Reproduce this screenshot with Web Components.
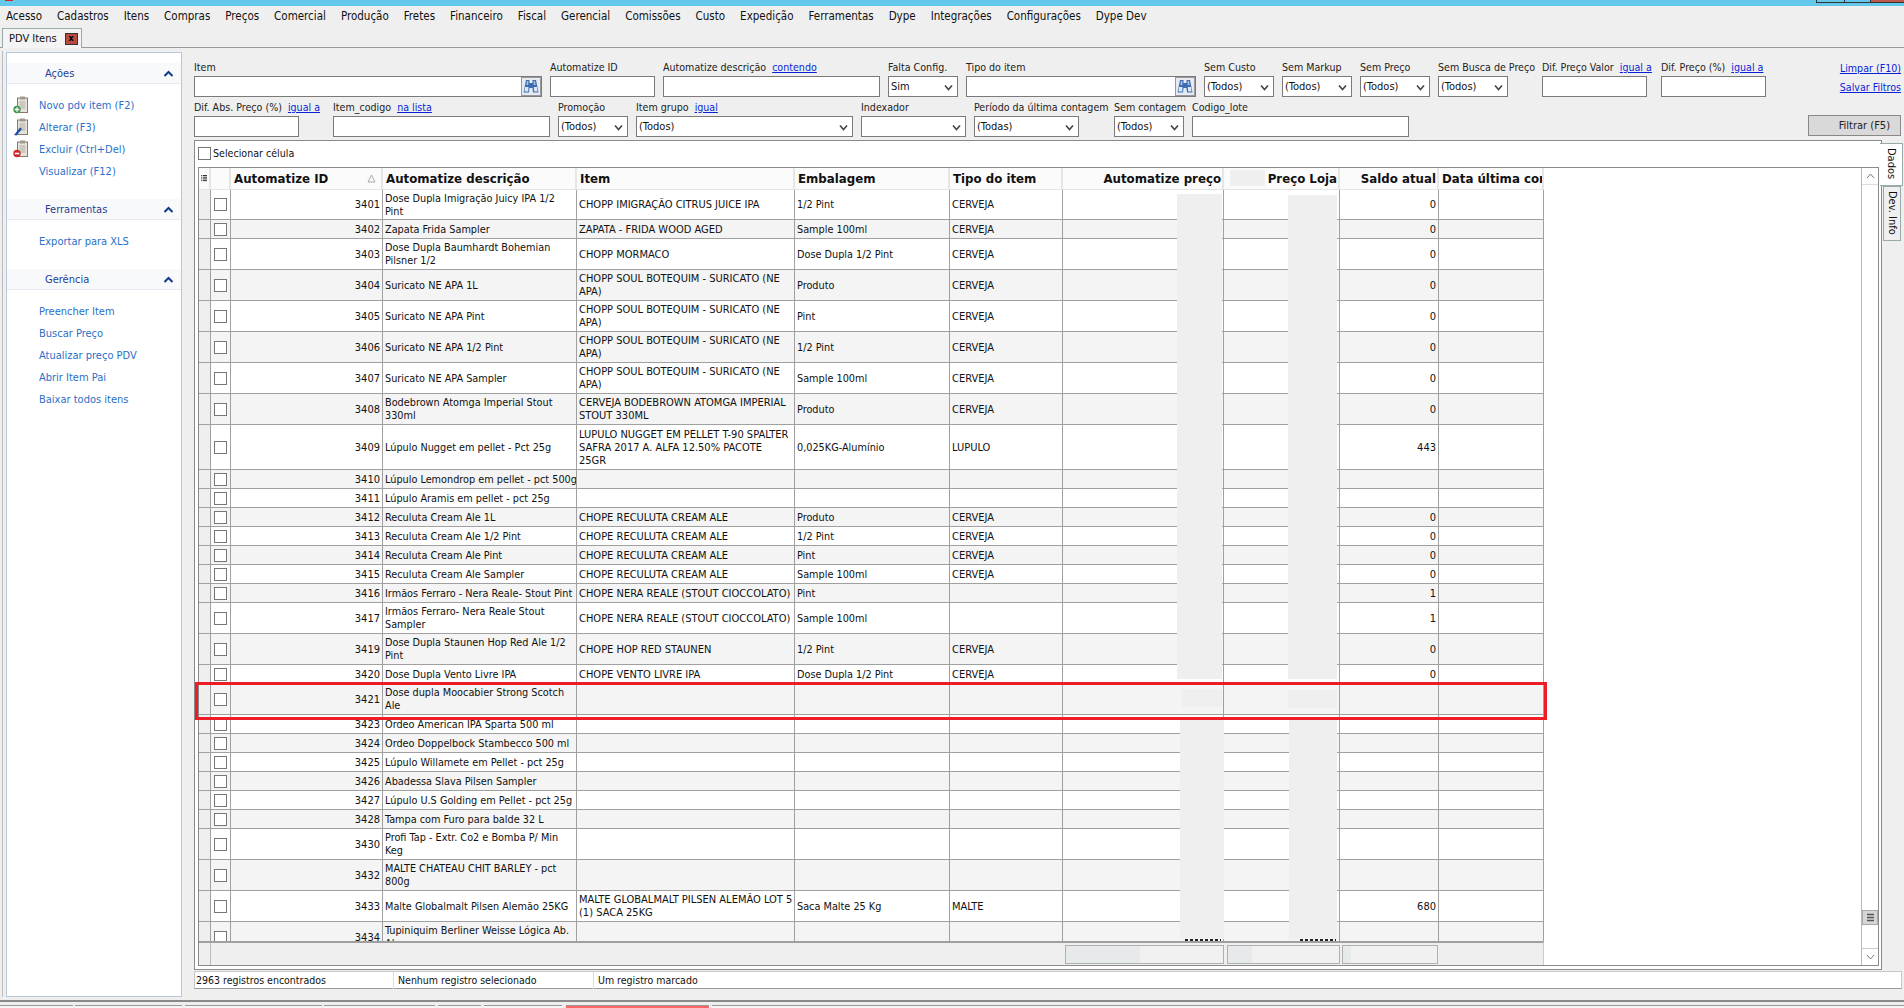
<!DOCTYPE html>
<html><head><meta charset="utf-8"><title>PDV Itens</title>
<style>
html,body{margin:0;height:100%;overflow:hidden;background:#efefef}
pdv-app{display:block;height:1008px}
</style></head><body>
<pdv-app></pdv-app>
<script>
const FONT = '"DejaVu Sans Condensed","DejaVu Sans",sans-serif';
const chevron = `<svg width="11" height="7" viewBox="0 0 11 7"><path d="M1.5 6 5.5 2l4 4" fill="none" stroke="#123a8c" stroke-width="2"/></svg>`;
const binoculars = `<svg width="16" height="15" viewBox="0 0 16 15"><path d="M3 1h3.500v3h3V1H13l2.500 12.500H10L9.500 9h-3L6 13.500H.5z" fill="#3f6cb0"/><path d="M2 8h3.500l-.3 4.500H1.500zM10.800 8h3.200l.5 4.500h-3.300z" fill="#dce8f6"/><path d="M4 2h1.300v4H3.400zM10.700 2H12l.6 4h-1.900z" fill="#a9c4e6"/></svg>`;

function clipIcon(badge) {
  const marks = {
    add: '<circle cx="4" cy="13.500" r="3.700" fill="#3f9a4f"/><path d="M1.800 13.500h4.400M4 11.300v4.400" stroke="#fff" stroke-width="1.300"/>',
    edit: '<path d="M1 17 7 9.500l2 1.500-5.500 6.500z" fill="#1f4fa8"/>',
    del: '<circle cx="4" cy="13.500" r="3.700" fill="#d02828"/><path d="M1.800 13.500h4.400" stroke="#fff" stroke-width="1.600"/>',
  };
  return `<svg width="16" height="18" viewBox="0 0 16 18"><rect x="4.500" y="2" width="10" height="14.500" fill="#e6e3da" stroke="#85796a"/><rect x="7" y=".5" width="5" height="3" fill="#a09a8c"/><path d="M6.500 6h6M6.500 8h6M6.500 10h6M6.500 12h6" stroke="#b0aca2"/>${marks[badge]||''}</svg>`;
}

class PdvSection extends HTMLElement {
  constructor() {
    super();
    this.attachShadow({mode:'open'}).innerHTML = `<style>
      :host{display:block}
      .head{height:21px;box-sizing:border-box;display:flex;align-items:center;justify-content:space-between;padding:0 7px 0 38px;background:#f8f9fb;border-bottom:1px solid #e6eaf0;color:#1f3f95;margin-bottom:10px}
      .body{display:flex;flex-direction:column}
    </style><div class="head"><span>${this.getAttribute('title')}</span>${chevron}</div><div class="body"><slot></slot></div>`;
  }
}
class PdvAction extends HTMLElement {
  constructor() {
    super();
    const ic = this.getAttribute('icon');
    this.attachShadow({mode:'open'}).innerHTML = `<style>
      :host{display:flex;align-items:center;height:22px;color:#2a6fc9;white-space:nowrap}
      .i{width:32px;padding-left:6px;box-sizing:border-box;height:18px;flex:none;display:block}
    </style><span class="i">${ic?clipIcon(ic):''}</span><slot></slot>`;
  }
}
class PdvField extends HTMLElement {
  constructor() {
    super();
    const w = this.getAttribute('w'), iw = this.getAttribute('iw') || w;
    const link = this.getAttribute('link'), kind = this.getAttribute('kind') || 'input';
    const value = this.getAttribute('value') || '';
    let ctl = '';
    if (kind === 'select') ctl = `<svg class="arrow" width="9" height="7" viewBox="0 0 9 7"><path d="M1 1.500l3.500 4 3.500-4" fill="none" stroke="#444" stroke-width="1.600"/></svg>`;
    if (kind === 'lookup') ctl = `<span class="bino">${binoculars}</span>`;
    this.attachShadow({mode:'open'}).innerHTML = `<style>
      :host{display:block;width:${w}px;flex:none}
      .lab{height:19px;line-height:20px;font-size:10.6px;white-space:nowrap;color:#222}
      a{color:#0a1fd8;text-decoration:underline;margin-left:6px}
      .box{height:21px;width:${iw}px;box-sizing:border-box;border:1px solid #7a7a7a;background:#fff;display:flex;align-items:center;padding:0 2px;position:relative;white-space:nowrap}
      .arrow{position:absolute;right:4px;top:7px}
      .bino{position:absolute;right:0;top:0;width:20px;height:19px;background:#e6eaf2;border:1px solid #9a9a9a;box-sizing:border-box;display:flex;align-items:center;justify-content:center;overflow:hidden}
    </style><div class="lab">${this.getAttribute('label')}${link?`<a>${link}</a>`:''}</div><div class="box">${value}${ctl}</div>`;
  }
}
class PdvFilters extends HTMLElement {
  constructor() {
    super();
    const f = (label,w,o={}) => `<pdv-field label="${label}" w="${w}" iw="${o.iw||w}" kind="${o.k||'input'}" value="${o.v||''}" ${o.l?`link="${o.l}"`:''}></pdv-field>`;
    const S = {k:'select',v:'(Todos)'};
    this.attachShadow({mode:'open'}).innerHTML = `<style>
      :host{display:block;height:89px;flex:none;box-sizing:border-box;padding:6px 3px 0 194px;position:relative}
      .row{display:flex;gap:8px;height:40px}
      .links{margin-left:auto;display:flex;flex-direction:column;align-items:flex-end;gap:5px;line-height:14px;font-size:10.6px;color:#0a1fd8;text-decoration:underline;white-space:nowrap;padding-top:4px}
      button{margin-left:auto;align-self:flex-end;width:93px;height:21px;margin-bottom:1px;background:#d9d9d9;border:1px solid #888;font:inherit;color:#222;text-align:right;padding:0 10px 0 0}
    </style>
    <div class="row">
      ${f('Item',348,{k:'lookup'})}${f('Automatize ID',105)}${f('Automatize descrição',217,{l:'contendo'})}
      ${f('Falta Config.',70,{k:'select',v:'Sim'})}${f('Tipo do item',230,{k:'lookup'})}
      ${f('Sem Custo',70,S)}${f('Sem Markup',70,S)}${f('Sem Preço',70,S)}${f('Sem Busca de Preço',96,{...S,iw:70})}
      ${f('Dif. Preço Valor',111,{iw:105,l:'igual a'})}${f('Dif. Preço (%)',105,{l:'igual a'})}
      <div class="links"><span>Limpar (F10)</span><span>Salvar Filtros</span></div>
    </div>
    <div class="row">
      ${f('Dif. Abs. Preço (%)',131,{iw:105,l:'igual a'})}${f('Item_codigo',217,{l:'na lista'})}${f('Promoção',70,S)}
      ${f('Item grupo',217,{...S,l:'igual'})}${f('Indexador',105,{k:'select'})}${f('Período da última contagem',132,{k:'select',v:'(Todas)',iw:105})}
      ${f('Sem contagem',70,S)}${f('Codigo_lote',217)}
      <button>Filtrar (F5)</button>
    </div>`;
  }
}
const COLS = '12px 20px 152px 194px 218px 155px 113px 161px 116px 99px 105px';
class PdvRow extends HTMLElement {
  set data(r) {
    const root = this.shadowRoot || this.attachShadow({mode:'open'});
    root.innerHTML = `<style>
      :host{display:grid;grid-template-columns:${COLS};width:1345px;height:${r.h}px;box-sizing:border-box;border-bottom:1px solid #a0a0a0;background:${r.alt?'#f4f4f4':'#fff'};line-height:13px}
      div{border-right:1px solid #a0a0a0;display:flex;align-items:center;padding:0 2px;white-space:pre;overflow:hidden;min-width:0;box-sizing:border-box}
      .ind{background:#efefef;padding:0}
      .chk{justify-content:center;padding:0}
      .chk i{width:13px;height:13px;box-sizing:border-box;border:1px solid #777;background:#fff;display:block}
      .n{justify-content:flex-end}
      .s{font-size:10.8px}
    </style><div class="ind"></div><div class="chk"><i></i></div><div class="n">${r.id}</div><div class="s">${r.d}</div><div>${r.i||''}</div><div class="s">${r.e||''}</div><div>${r.t||''}</div><div></div><div></div><div class="n">${r.s??''}</div><div></div>`;
  }
}
const CB='CHOPP SOUL BOTEQUIM - SURICATO (NE\nAPA)', CR='CHOPE RECULUTA CREAM ALE', NR='CHOPE NERA REALE (STOUT CIOCCOLATO)';
const ROWS = [
 [30,3401,'Dose Dupla Imigração Juicy IPA 1/2\nPint','CHOPP IMIGRAÇÃO CITRUS JUICE IPA','1/2 Pint','CERVEJA',0],
 [19,3402,'Zapata Frida Sampler','ZAPATA - FRIDA WOOD AGED','Sample 100ml','CERVEJA',0],
 [31,3403,'Dose Dupla Baumhardt Bohemian\nPilsner 1/2','CHOPP MORMACO','Dose Dupla 1/2 Pint','CERVEJA',0],
 [31,3404,'Suricato NE APA 1L',CB,'Produto','CERVEJA',0],
 [31,3405,'Suricato NE APA Pint',CB,'Pint','CERVEJA',0],
 [31,3406,'Suricato NE APA 1/2 Pint',CB,'1/2 Pint','CERVEJA',0],
 [31,3407,'Suricato NE APA Sampler',CB,'Sample 100ml','CERVEJA',0],
 [31,3408,'Bodebrown Atomga Imperial Stout\n330ml','CERVEJA BODEBROWN ATOMGA IMPERIAL\nSTOUT 330ML','Produto','CERVEJA',0],
 [45,3409,'Lúpulo Nugget em pellet - Pct 25g','LUPULO NUGGET EM PELLET T-90 SPALTER\nSAFRA 2017 A. ALFA 12.50% PACOTE\n25GR','0,025KG-Alumínio','LUPULO',443],
 [19,3410,'Lúpulo Lemondrop em pellet - pct 500g'],
 [19,3411,'Lúpulo Aramis em pellet - pct 25g'],
 [19,3412,'Reculuta Cream Ale 1L',CR,'Produto','CERVEJA',0],
 [19,3413,'Reculuta Cream Ale 1/2 Pint',CR,'1/2 Pint','CERVEJA',0],
 [19,3414,'Reculuta Cream Ale Pint',CR,'Pint','CERVEJA',0],
 [19,3415,'Reculuta Cream Ale Sampler',CR,'Sample 100ml','CERVEJA',0],
 [19,3416,'Irmãos Ferraro - Nera Reale- Stout Pint',NR,'Pint','',1],
 [31,3417,'Irmãos Ferraro- Nera Reale Stout\nSampler',NR,'Sample 100ml','',1],
 [31,3419,'Dose Dupla Staunen Hop Red Ale 1/2\nPint','CHOPE HOP RED STAUNEN','1/2 Pint','CERVEJA',0],
 [19,3420,'Dose Dupla Vento Livre IPA','CHOPE VENTO LIVRE IPA','Dose Dupla 1/2 Pint','CERVEJA',0],
 [31,3421,'Dose dupla Moocabier Strong Scotch\nAle'],
 [19,3423,'Ordeo American IPA Sparta 500 ml'],
 [19,3424,'Ordeo Doppelbock Stambecco 500 ml'],
 [19,3425,'Lúpulo Willamete em Pellet - pct 25g'],
 [19,3426,'Abadessa Slava Pilsen Sampler'],
 [19,3427,'Lúpulo U.S Golding em Pellet - pct 25g'],
 [19,3428,'Tampa com Furo para balde 32 L'],
 [31,3430,'Profi Tap - Extr. Co2 e Bomba P/ Min\nKeg'],
 [31,3432,'MALTE CHATEAU CHIT BARLEY - pct\n800g'],
 [31,3433,'Malte Globalmalt Pilsen Alemão 25KG','MALTE GLOBALMALT PILSEN ALEMÃO LOT 5\n(1) SACA 25KG','Saca Malte 25 Kg','MALTE',680],
 [31,3434,'Tupiniquim Berliner Weisse Lógica Ab.\nAle'],
];
class PdvGrid extends HTMLElement {
  constructor() {
    super();
    const heads = [['',''],['',''],['Automatize ID','sort'],['Automatize descrição',''],['Item',''],['Embalagem',''],['Tipo do item',''],['Automatize preço','r'],['Preço Loja','r'],['Saldo atual','r'],['Data última contagem','']];
    this.attachShadow({mode:'open'}).innerHTML = `<style>
      :host{display:block;position:relative;height:799px;box-sizing:border-box;border:1px solid #8a8a8a;background:#fff;overflow:hidden;width:1681px;margin-left:3px;flex:none}
      .head{display:grid;grid-template-columns:${COLS};width:1345px;height:22px;box-sizing:border-box;background:#fbfbfb;border-bottom:1px solid #e4e4e4;font:bold 11.8px "DejaVu Sans",sans-serif;color:#111}
      .head div{border-right:2px solid #e6e6e6;display:flex;align-items:center;justify-content:space-between;padding:0 1px 0 3px;white-space:nowrap;overflow:hidden;box-sizing:border-box;min-width:0}
      .head .r{justify-content:flex-end}
      .body{height:751px;overflow:hidden}
      .foot{display:grid;grid-template-columns:12px 854px 159px 3px 113px 2px 96px;width:1345px;height:24px;box-sizing:border-box;border-top:2px solid #a0a0a0;border-right:1px solid #ccc;background:#efefef;align-items:center}
      .foot .c{height:100%;border-right:1px solid #bbb;box-sizing:border-box}
      .foot i{display:block;height:19px;box-sizing:border-box;border:1px solid #b0b0b0}
      .redact{position:absolute;background:#efefef}
      .peek{position:absolute;top:771px;height:2px;background:repeating-linear-gradient(90deg,#222 0 3px,transparent 3px 5px)}
      .sb{position:absolute;right:0;top:0;bottom:0;width:17px;background:#fff;border-left:1px solid #b8b8b8;box-sizing:border-box}
      .sb b{position:absolute;left:0;right:0;display:flex;align-items:center;justify-content:center;box-sizing:border-box}
      .up{top:0;height:17px;border-bottom:1px solid #ddd}
      .dn{bottom:0;height:17px;border-top:1px solid #ccc}
      .th{top:742px;height:15px;background:#d6d6d6;border:1px solid #a8a8a8}
      .sort{width:9px;height:9px;margin-right:4px}
    </style>
    <div class="head">${heads.map(([t,k],i)=>i==0?`<div style="padding:0 2px"><svg width="7" height="9" viewBox="0 0 7 9"><path d="M0 1h1M2 1h5M0 3h1M2 3h5M0 5h1M2 5h5M0 7h1M2 7h5" stroke="#111"/></svg></div>`:`<div class="${k=='r'?'r':''}">${t}${k=='sort'?'<svg class="sort" viewBox="0 0 9 9"><path d="M4.500 1 8 8H1z" fill="none" stroke="#aaa"/></svg>':''}</div>`).join('')}</div>
    <div class="body" id="b"></div>
    <div class="foot"><span class="c"></span><span></span><i style="background:linear-gradient(90deg,#e6eaea 47%,#f1f1f1 47%)"></i><span></span><i style="background:linear-gradient(90deg,#e6eaea 22%,#f1f1f1 22%)"></i><span></span><i style="background:linear-gradient(90deg,#e6eaea 8%,#f1f1f1 8%)"></i></div>
    <div class="sb"><b class="up"><svg width="9" height="6" viewBox="0 0 9 6"><path d="M1 5l3.500-4L8 5" fill="none" stroke="#777"/></svg></b>
      <b class="th"><svg width="7" height="9" viewBox="0 0 7 9"><path d="M0 1.500h7M0 4.500h7M0 7.500h7" stroke="#555" stroke-width="1.600"/></svg></b>
      <b class="dn"><svg width="9" height="6" viewBox="0 0 9 6"><path d="M1 1l3.500 4L8 1" fill="none" stroke="#777"/></svg></b></div>
    <span class="redact" style="left:1031px;top:2px;width:35px;height:16px"></span>
    <span class="redact" style="left:978px;top:26px;width:45px;height:485px"></span>
    <span class="redact" style="left:1089px;top:27px;width:49px;height:484px"></span>
    <span class="redact" style="left:983px;top:521px;width:40px;height:18px"></span>
    <span class="redact" style="left:1089px;top:522px;width:49px;height:18px"></span>
    <span class="redact" style="left:981px;top:552px;width:44px;height:219px"></span>
    <span class="redact" style="left:1090px;top:552px;width:48px;height:219px"></span>
    <span class="peek" style="left:986px;width:36px"></span>
    <span class="peek" style="left:1101px;width:36px"></span>`;
    const b = this.shadowRoot.getElementById('b');
    ROWS.forEach((x,i)=>{
      const r = document.createElement('pdv-row');
      r.data = {h:x[0],id:x[1],d:x[2],i:x[3],e:x[4],t:x[5],s:x[6],alt:i%2==1};
      b.appendChild(r);
    });
  }
}
class PdvStatus extends HTMLElement {
  constructor() {
    super();
    this.attachShadow({mode:'open'}).innerHTML = `<style>
      :host{display:grid;grid-template-columns:199px 200px 1fr;flex:none;height:18px;margin:1px 2px 0 194px;box-sizing:border-box;background:#fff;border:1px solid #c8c8c8;border-bottom:1px solid #999;line-height:17px;font-size:10.5px}
      span{padding-left:1px;border-right:1px solid #ddd;white-space:nowrap}
      span+span{padding-left:4px}
      span:last-child{border:0}
    </style><span>2963 registros encontrados</span><span>Nenhum registro selecionado</span><span>Um registro marcado</span>`;
  }
}
class PdvApp extends HTMLElement {
  constructor() {
    super();
    const menu = 'Acesso,Cadastros,Itens,Compras,Preços,Comercial,Produção,Fretes,Financeiro,Fiscal,Gerencial,Comissões,Custo,Expedição,Ferramentas,Dype,Integrações,Configurações,Dype Dev'.split(',');
    const dock = [[0,73],[75,107],[185,137],[324,111],[438,43],[484,78],[566,143,'#f66'],[712,1192]];
    this.attachShadow({mode:'open'}).innerHTML = `<style>
      :host{display:flex;flex-direction:column;height:1008px;font:11px ${FONT};color:#111;position:relative;overflow:hidden}
      .title{height:6px;background:#64c8ea;position:relative;flex:none}
      .title i{position:absolute;top:0;height:2px;border:1px solid #333;border-top:0}
      .title u{position:absolute;left:5px;top:0;width:8px;height:1px;background:#c03028}
      .menu{height:22px;box-sizing:border-box;padding:0 0 2px 6px;display:flex;gap:15px;align-items:center;flex:none;font-size:11.5px}
      .tabs{height:20px;flex:none;box-sizing:border-box;border-bottom:1px solid #999;display:flex;padding-left:2px}
      .tab{width:80px;height:20px;box-sizing:border-box;border:1px solid #9aa;border-bottom:0;background:#f4f4f4;display:flex;align-items:center;padding-left:6px;gap:8px}
      .x{width:13px;height:12px;background:#b84a40;border:1px solid #333;box-sizing:border-box;color:#000;font:bold 8px/9px "DejaVu Sans",sans-serif;text-align:center}
      .stage{flex:none;height:949px;margin-top:3px;position:relative;display:flex;flex-direction:column}
      .side{position:absolute;left:6px;top:1px;width:176px;height:945px;box-sizing:border-box;background:#fff;border:1px solid #b5c9dc;padding-top:10px;display:flex;flex-direction:column;gap:17px}
      .rule{position:absolute;left:2px;top:0;width:1px;height:946px;background:#bbb}
      .pane{margin-left:194px;width:1688px;height:830px;box-sizing:border-box;background:#fff;border:1px solid #8a8a8a;display:flex;flex-direction:column;flex:none}
      .sel{height:26px;box-sizing:border-box;padding:0 0 2px 3px;display:flex;align-items:center;gap:2px;flex:none;font-size:10.6px}
      .sel i{width:13px;height:13px;border:1px solid #777;background:#fff;box-sizing:border-box}
      .vt{position:absolute;writing-mode:vertical-rl;display:flex;align-items:center;justify-content:flex-start;box-sizing:border-box;border:1px solid #9aa;padding-top:4px}
      .mark{position:absolute;left:195px;top:631px;width:1352px;height:38px;box-sizing:border-box;border:3px solid #ee1c25}
      .dock{position:absolute;left:0;right:0;top:1000px;height:8px;border-top:2px solid #8a8a8a;box-sizing:border-box}
      .dock i{position:absolute;top:3px;height:3px;border-top:1px solid #999;background:#f6f6f6}
    </style>
    <div class="title"><u></u><i style="left:1816px;width:27px"></i><i style="left:1844px;width:25px"></i><i style="left:1870px;width:34px;background:#c0584f"></i></div>
    <div class="menu">${menu.map(m=>`<span>${m}</span>`).join('')}</div>
    <div class="tabs"><div class="tab">PDV Itens<span class="x">x</span></div></div>
    <div class="stage">
      <div class="side">
        <pdv-section title="Ações"><pdv-action icon="add">Novo pdv item (F2)</pdv-action><pdv-action icon="edit">Alterar (F3)</pdv-action><pdv-action icon="del">Excluir (Ctrl+Del)</pdv-action><pdv-action>Visualizar (F12)</pdv-action></pdv-section>
        <pdv-section title="Ferramentas"><pdv-action>Exportar para XLS</pdv-action></pdv-section>
        <pdv-section title="Gerência"><pdv-action>Preencher Item</pdv-action><pdv-action>Buscar Preço</pdv-action><pdv-action>Atualizar preço PDV</pdv-action><pdv-action>Abrir Item Pai</pdv-action><pdv-action>Baixar todos itens</pdv-action></pdv-section>
      </div>
      <div class="rule"></div>
      <pdv-filters></pdv-filters>
      <div class="pane"><div class="sel"><i></i>Selecionar célula</div><pdv-grid></pdv-grid></div>
      <pdv-status></pdv-status>
      <div class="vt" style="left:1880px;top:92px;width:23px;height:43px;background:#fff;border-left:0">Dados</div>
      <div class="vt" style="left:1883px;top:135px;width:18px;height:55px;background:#efefef">Dev. Info</div>
      <div class="mark"></div>
    </div>
    <div class="dock">${dock.map(([l,w,c])=>`<i style="left:${l}px;width:${w}px;${c?`background:${c}`:''}"></i>`).join('')}</div>`;
  }
}
customElements.define('pdv-section', PdvSection);
customElements.define('pdv-action', PdvAction);
customElements.define('pdv-field', PdvField);
customElements.define('pdv-filters', PdvFilters);
customElements.define('pdv-row', PdvRow);
customElements.define('pdv-grid', PdvGrid);
customElements.define('pdv-status', PdvStatus);
customElements.define('pdv-app', PdvApp);
</script>
</body></html>
